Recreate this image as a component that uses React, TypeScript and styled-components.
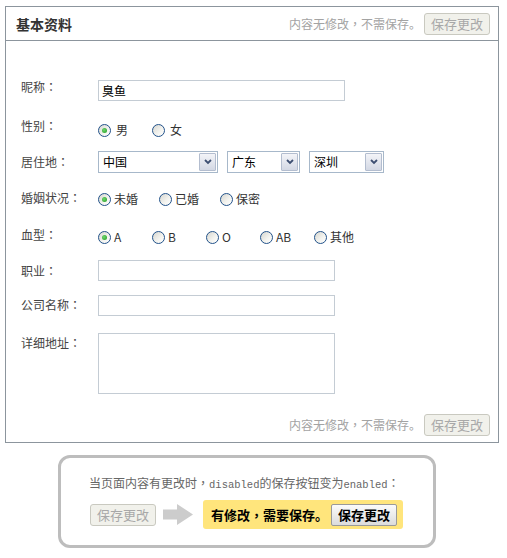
import React from "react";
import styled, { createGlobalStyle } from "styled-components";

const Global = createGlobalStyle`
  html, body { margin: 0; padding: 0; background: #fff; }
  body {
    font-family: "Noto Sans CJK SC", "Noto Sans", sans-serif;
    font-size: 12px;
    color: #333;
  }
  * { box-sizing: border-box; }
`;

const Panel = styled.section`
  margin: 6px 0 0 5px;
  width: 494px;
  border: 1px solid #8c959d;
`;

const Header = styled.header`
  height: 34px;
  display: flex;
  align-items: center;
  justify-content: space-between;
  padding: 0 8px 0 10px;
  border-bottom: 1px solid #8c959d;
`;

const Title = styled.h2`
  margin: 0;
  font-size: 14px;
  font-weight: bold;
  color: #333;
  line-height: 16px;
`;

const SaveGroup = styled.div`
  display: flex;
  align-items: center;
  gap: 3px;
`;

const Hint = styled.span`
  color: #a3a3a3;
  font-size: 12px;
  line-height: 14px;
`;

/* centred full-width punctuation, as in the reference */
const Punct = styled.span`
  font-family: "Noto Sans CJK TC", "Noto Sans CJK SC", sans-serif;
`;

const DisabledButton = styled.button`
  width: 66px;
  height: 22px;
  padding: 0;
  border: 1px solid #c9c9c0;
  border-radius: 3px;
  background: #f1f1eb;
  color: #a8a8a8;
  font-family: inherit;
  font-size: 13px;
  line-height: 20px;
`;

const Form = styled.div`
  padding: 39px 0 0 15px;
`;

const Row = styled.div<{ $h: number }>`
  display: grid;
  grid-template-columns: 77px auto;
  align-items: start;
  height: ${(p) => p.$h}px;
`;

const Label = styled.span<{ $lh: number }>`
  line-height: ${(p) => p.$lh}px;
  color: #444;
`;

const TextInput = styled.input<{ $w: number }>`
  width: ${(p) => p.$w}px;
  height: 21px;
  margin: 0;
  border: 1px solid #c4ccd4;
  padding: 0 3px;
  font: inherit;
  font-size: 12px;
  color: #000;
  outline: none;
`;

const TextArea = styled.textarea`
  width: 237px;
  height: 61px;
  margin: 0;
  border: 1px solid #c4ccd4;
  resize: none;
  font: inherit;
  outline: none;
`;

const RadioGroup = styled.div<{ $mt: number; $gap: number }>`
  display: flex;
  align-items: center;
  gap: ${(p) => p.$gap}px;
  margin-top: ${(p) => p.$mt}px;
  height: 14px;
`;

const RadioItem = styled.label<{ $w?: number; $inner: number }>`
  display: flex;
  align-items: center;
  gap: ${(p) => p.$inner}px;
  width: ${(p) => (p.$w ? `${p.$w}px` : "auto")};
  line-height: 14px;
  color: #333;
`;

const RadioDot = styled.span<{ $on?: boolean }>`
  position: relative;
  flex: none;
  width: 13px;
  height: 13px;
  border-radius: 50%;
  border: 1px solid #22528a;
  background: linear-gradient(135deg, #d6d6d0 0%, #f4f4f0 60%, #ffffff 100%);
  &::after {
    content: "";
    display: ${(p) => (p.$on ? "block" : "none")};
    position: absolute;
    left: 3px;
    top: 3px;
    width: 5px;
    height: 5px;
    border-radius: 50%;
    background: radial-gradient(circle at 40% 40%, #6fd66f, #1f9a1f);
  }
`;

const Selects = styled.div`
  display: flex;
  gap: 9px;
`;

const SelectBox = styled.div<{ $w: number }>`
  width: ${(p) => p.$w}px;
  height: 22px;
  display: flex;
  align-items: center;
  border: 1px solid #a7b8ca;
  padding: 0 1px 0 4px;
  color: #000;
  font-size: 12px;
`;

const SelectText = styled.span`
  flex: 1;
  line-height: 14px;
`;

const ArrowBox = styled.span`
  width: 17px;
  height: 18px;
  display: flex;
  align-items: center;
  justify-content: center;
  border: 1px solid #b3bdcf;
  border-radius: 1px;
  background: linear-gradient(#f3f4f8, #d3d8e4);
`;

const Footer = styled.div`
  display: flex;
  justify-content: flex-end;
  margin-top: 20px;
  padding: 0 8px 6px 0;
`;

const Note = styled.div`
  margin: 12px 0 0 58px;
  width: 378px;
  height: 93px;
  border: 3px solid #bdbdbd;
  border-radius: 12px;
  padding: 17px 0 0 28px;
`;

const NoteText = styled.p`
  margin: 0;
  line-height: 16px;
  color: #666;
  font-size: 12px;
`;

const Mono = styled.span`
  font-family: "Liberation Mono", "DejaVu Sans Mono", monospace;
  font-size: 10.5px;
`;

const ActionRow = styled.div`
  display: flex;
  align-items: center;
  margin: 7px 0 0 1px;
`;

const ArrowSvg = styled.svg`
  margin: 0 10px 0 7px;
  flex: none;
`;

const Changed = styled.div`
  height: 29px;
  display: flex;
  align-items: center;
  gap: 3px;
  padding: 0 6px 0 8px;
  background: #ffe57c;
  border-radius: 3px;
`;

const ChangedText = styled.span`
  font-weight: bold;
  font-size: 13px;
  color: #000;
  line-height: 16px;
`;

const ActiveButton = styled.button`
  width: 66px;
  height: 22px;
  padding: 0;
  border: 1px solid #9a9a9a;
  border-radius: 2px;
  background: linear-gradient(#fbfbfb, #dcdcdc);
  color: #000;
  font-family: inherit;
  font-weight: bold;
  font-size: 13px;
  line-height: 20px;
`;

const Chevron = () => (
  <svg width="8" height="6" viewBox="0 0 8 6">
    <path d="M1 1 L4 4 L7 1" fill="none" stroke="#3d4f72" strokeWidth="1.8" />
  </svg>
);

const Select = ({ w, text }: { w: number; text: string }) => (
  <SelectBox $w={w}>
    <SelectText>{text}</SelectText>
    <ArrowBox>
      <Chevron />
    </ArrowBox>
  </SelectBox>
);

type Opt = { text: string; on?: boolean };

const Radios = ({
  opts,
  mt,
  gap,
  inner,
  w,
}: {
  opts: Opt[];
  mt: number;
  gap: number;
  inner: number;
  w?: number;
}) => (
  <RadioGroup $mt={mt} $gap={gap}>
    {opts.map((o) => (
      <RadioItem key={o.text} $w={w} $inner={inner}>
        <RadioDot $on={o.on} />
        {o.text}
      </RadioItem>
    ))}
  </RadioGroup>
);

const FieldLabel = ({ lh, text }: { lh: number; text: string }) => (
  <Label $lh={lh}>
    {text}
    <Punct>：</Punct>
  </Label>
);

const Save = () => (
  <SaveGroup>
    <Hint>
      内容无修改<Punct>，</Punct>不需保存。
    </Hint>
    <DisabledButton disabled>保存更改</DisabledButton>
  </SaveGroup>
);

export default function App() {
  return (
    <>
      <Global />
      <Panel>
        <Header>
          <Title>基本资料</Title>
          <Save />
        </Header>
        <Form>
          <Row $h={39}>
            <FieldLabel lh={13} text="昵称" />
            <TextInput $w={247} defaultValue="臭鱼" />
          </Row>
          <Row $h={32}>
            <FieldLabel lh={14} text="性别" />
            <Radios
              mt={4}
              gap={0}
              inner={5}
              w={54}
              opts={[{ text: "男", on: true }, { text: "女" }]}
            />
          </Row>
          <Row $h={40}>
            <FieldLabel lh={22} text="居住地" />
            <Selects>
              <Select w={120} text="中国" />
              <Select w={73} text="广东" />
              <Select w={75} text="深圳" />
            </Selects>
          </Row>
          <Row $h={37}>
            <FieldLabel lh={14} text="婚姻状况" />
            <Radios
              mt={1}
              gap={21}
              inner={3}
              opts={[{ text: "未婚", on: true }, { text: "已婚" }, { text: "保密" }]}
            />
          </Row>
          <Row $h={32}>
            <FieldLabel lh={14} text="血型" />
            <Radios
              mt={2}
              gap={0}
              inner={3}
              w={54}
              opts={[
                { text: "A", on: true },
                { text: "B" },
                { text: "O" },
                { text: "AB" },
                { text: "其他" },
              ]}
            />
          </Row>
          <Row $h={35}>
            <FieldLabel lh={21} text="职业" />
            <TextInput $w={237} />
          </Row>
          <Row $h={38}>
            <FieldLabel lh={20} text="公司名称" />
            <TextInput $w={237} />
          </Row>
          <Row $h={61}>
            <FieldLabel lh={20} text="详细地址" />
            <TextArea />
          </Row>
        </Form>
        <Footer>
          <Save />
        </Footer>
      </Panel>
      <Note>
        <NoteText>
          当页面内容有更改时<Punct>，</Punct>
          <Mono>disabled</Mono>的保存按钮变为<Mono>enabled</Mono>
          <Punct>：</Punct>
        </NoteText>
        <ActionRow>
          <DisabledButton disabled>保存更改</DisabledButton>
          <ArrowSvg width="30" height="21" viewBox="0 0 30 21">
            <polygon points="0,5.5 14,5.5 14,0 30,10.5 14,21 14,15.5 0,15.5" fill="#cccccc" />
          </ArrowSvg>
          <Changed>
            <ChangedText>
              有修改<Punct>，</Punct>需要保存。
            </ChangedText>
            <ActiveButton>保存更改</ActiveButton>
          </Changed>
        </ActionRow>
      </Note>
    </>
  );
}
